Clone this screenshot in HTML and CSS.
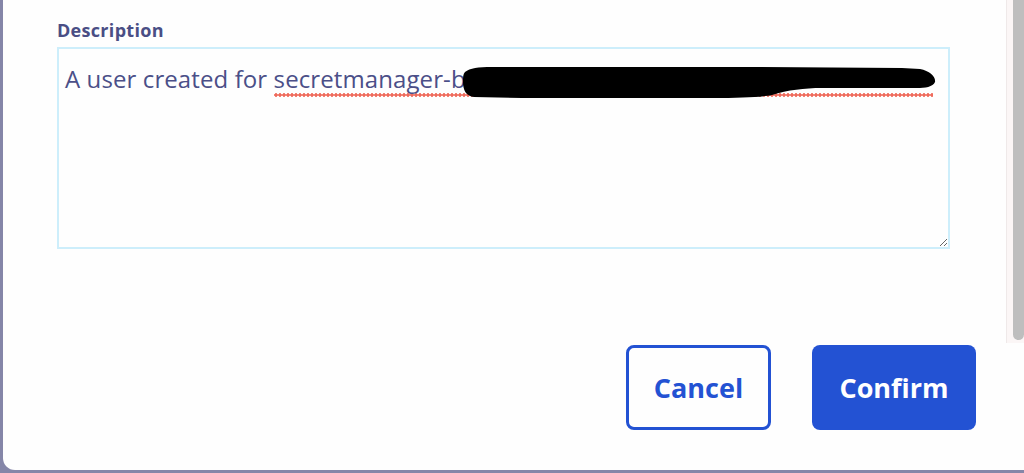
FILE: index.html
```html
<!DOCTYPE html>
<html lang="en">
<head>
<meta charset="utf-8">
<title>Description</title>
<link rel="stylesheet" href="styles.css">
</head>
<body>
<div class="modal">
  <div class="modal-body">
    <div class="content">
      <label class="label">Description</label>
      <div class="field">
        <p class="value">A user created for <span class="misspelled">secretmanager-b<span class="tail"></span></span></p>
        <svg class="redaction" width="476" height="33" viewBox="0 0 476 33" aria-hidden="true">
          <path d="M3 6 C8 2 16 1 30 1 L300 1 L440 2 L458 3 C468 5 474 11 473 16 C471 21 463 22 455 22 L360 22 C342 22 326 24 310 29 C300 31 280 32 250 32 L60 32 L12 31 C4 30 1 24 1 16 C1 11 1 8 3 6 Z" fill="#000"/>
        </svg>
      </div>
    </div>
    <div class="scrollbar"><div class="thumb"></div></div>
  </div>
  <div class="footer">
    <button class="btn btn-outline">Cancel</button>
    <button class="btn btn-primary">Confirm</button>
  </div>
</div>
</body>
</html>
```
FILE: styles.css
```css
html, body {
  margin: 0;
  padding: 0;
}
body {
  width: 1024px;
  height: 473px;
  overflow: hidden;
  background: #8586a8;
  font-family: "Open Sans", Lato, sans-serif;
}
.modal {
  margin-left: 3px;
  height: 470px;
  background: #fefefe;
  border-bottom-left-radius: 12px;
  display: flex;
  flex-direction: column;
}
.modal-body {
  height: 343px;
  display: flex;
}
.content {
  flex: 1;
  padding: 20px 53px 0 54px;
}
.label {
  display: block;
  font-weight: 700;
  font-size: 18px;
  letter-spacing: 0.3px;
  line-height: 20px;
  color: #4a4e85;
  margin-bottom: 7px;
}
.field {
  position: relative;
  box-sizing: border-box;
  width: 893px;
  height: 202px;
  border: 2px solid #cdeefb;
  padding: 15px 6px;
  resize: both;
  overflow: auto;
}
.value {
  margin: 0;
  font-size: 24px;
  letter-spacing: 0.1px;
  line-height: 30px;
  color: #4b4f88;
  white-space: nowrap;
}
.misspelled {
  padding-bottom: 2px;
  background-image: radial-gradient(circle, #ef6b5c 1.5px, rgba(239,107,92,0) 2px);
  background-size: 4px 4px;
  background-repeat: repeat-x;
  background-position: 0 100%;
}
.tail {
  display: inline-block;
  width: 467px;
}
.redaction {
  position: absolute;
  left: 403px;
  top: 17px;
}
.scrollbar {
  width: 18px;
  height: 343px;
  box-sizing: border-box;
  background: #fbf6f6;
  border-left: 1px solid #efe9e9;
  padding: 0 0 3px 6px;
  display: flex;
}
.thumb {
  flex: 1;
  background: #bebebe;
  border-radius: 0 0 6px 6px;
}
.footer {
  flex: 1;
  display: flex;
  justify-content: flex-end;
  align-items: flex-start;
  gap: 41px;
  padding: 2px 48px 0 0;
}
.btn {
  box-sizing: border-box;
  height: 85px;
  border-radius: 8px;
  font-family: "Open Sans", Lato, sans-serif;
  font-weight: 700;
  font-size: 27px;
  padding: 0;
  cursor: pointer;
}
.btn-outline {
  width: 145px;
  background: #fefefe;
  border: 3px solid #2352d3;
  color: #2352d3;
}
.btn-primary {
  width: 164px;
  background: #2352d3;
  border: 0;
  color: #ffffff;
}
```
